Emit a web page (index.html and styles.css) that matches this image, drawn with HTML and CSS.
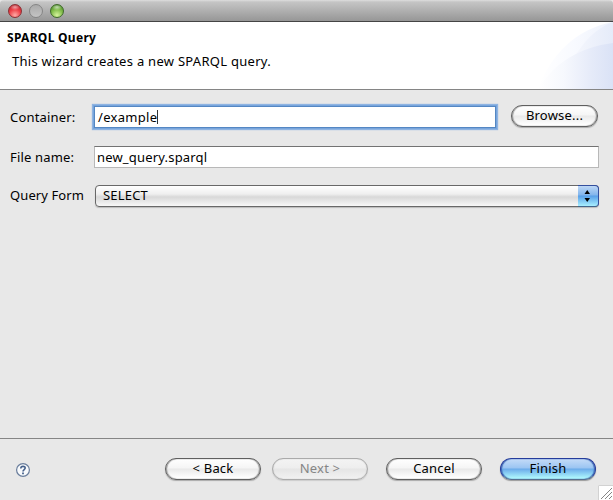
FILE: index.html
```html
<!DOCTYPE html>
<html lang="en">
<head>
<meta charset="utf-8">
<title>SPARQL Query</title>
<link rel="stylesheet" href="styles.css">
</head>
<body>
<main class="window">
  <div class="titlebar">
    <span class="light red"></span><span class="light gray"></span><span class="light green"></span>
  </div>
  <header class="banner">
    <svg class="swoosh" width="82" height="67" viewBox="0 0 82 67" aria-hidden="true">
      <defs>
        <linearGradient id="a"><stop offset="0" stop-color="#fff"/><stop offset=".5" stop-color="#f8faff"/><stop offset="1" stop-color="#edf1fb"/></linearGradient>
        <linearGradient id="b"><stop offset="0" stop-color="#f5f7fd"/><stop offset="1" stop-color="#e5ebf9"/></linearGradient>
        <linearGradient id="c"><stop offset="0" stop-color="#fff"/><stop offset=".35" stop-color="#f6f8fd"/><stop offset=".7" stop-color="#e6ebf9"/><stop offset="1" stop-color="#dae2f6"/></linearGradient>
      </defs>
      <path d="M7 67C19 34 44 7 82 0V67Z" fill="url(#a)"/>
      <path d="M43 36C53 19 64 7 82 0V40Z" fill="url(#b)"/>
      <path d="M7 67C23 41 49 25 82 21V67Z" fill="url(#c)"/>
    </svg>
    <h1>SPARQL Query</h1>
    <p>This wizard creates a new SPARQL query.</p>
  </header>
  <section class="form">
    <div class="row container-row">
      <span class="label">Container:</span>
      <div class="field focused"><span>/example</span><i class="caret"></i></div>
      <button class="button browse"><span>Browse...</span></button>
    </div>
    <div class="row file-row">
      <span class="label">File name:</span>
      <div class="field"><span>new_query.sparql</span></div>
    </div>
    <div class="row query-row">
      <span class="label">Query Form</span>
      <div class="select"><span>SELECT</span>
        <div class="stepper"><svg width="20" height="20" viewBox="0 0 20 20"><path d="M6.500 8h5.500L9.250 4ZM6.500 12h5.500L9.250 16Z"/></svg></div>
      </div>
    </div>
  </section>
  <footer class="footer">
    <svg class="help" width="16" height="16" viewBox="0 0 16 16"><circle cx="8" cy="8" r="6.400" fill="#f8fafc" stroke="#6a7e9c" stroke-width="1.200"/><path d="M5.800 6.400C5.800 3.700 10.200 3.700 10.200 6.100C10.200 7.600 8 7.600 8 9.500" fill="none" stroke="#47628c" stroke-width="1.600"/><path d="M7.100 10.600h1.800v1.600H7.100z" fill="#47628c"/></svg>
    <button class="button back"><span>&lt; Back</span></button>
    <button class="button next" disabled><span>Next &gt;</span></button>
    <button class="button cancel"><span>Cancel</span></button>
    <button class="button finish"><span>Finish</span></button>
    <svg class="grip" width="15" height="15" viewBox="0 0 15 15"><path d="M0 0h15v15H0z" fill="#fff"/><path d="M.5 15V.5H15" fill="none" stroke="#d2d2d2"/><path d="M3 14L14 3M7 14L14 7M11 14L14 11" stroke="#858585" stroke-width="1"/></svg>
  </footer>
</main>
</body>
</html>
```
FILE: styles.css
```css
* { box-sizing: border-box; }
body { margin: 0; background: #e8e8e8; }
.window {
  width: 613px; height: 500px; display: flex; flex-direction: column;
  position: relative; overflow: hidden; background: #e8e8e8; color: #000;
  font: 13px/18px "Noto Sans", "Open Sans", sans-serif; letter-spacing: .18px;
}
.titlebar {
  height: 22px; flex: none; display: flex; gap: 7px; padding: 4px 0 0 8px;
  background: linear-gradient(#dedede 0, #c5c5c5 2px, #969696 21px);
  border-bottom: 1px solid #454545; border-radius: 4px 4px 0 0;
}
.light { width: 14px; height: 14px; border-radius: 50%; border: 1px solid #777; }
.red { background: radial-gradient(ellipse 5px 3px at 50% 18%, #fff8, transparent), radial-gradient(circle at 50% 85%, #ffaaa5, #ee4148 50%, #a91822); border-color: #8a3034; }
.gray { background: linear-gradient(#aaa, #c4c4c4); border-color: #858585; }
.green { background: radial-gradient(ellipse 5px 3px at 50% 18%, #fff9, transparent), radial-gradient(circle at 50% 85%, #d6f49d, #82bd4b 50%, #3b7b1f); border-color: #3f6a2a; }
.banner { height: 68px; flex: none; position: relative; padding: 7px 0 0 7px; background: #fff; border-bottom: 1px solid #858585; }
.swoosh { position: absolute; right: 0; top: 0; }
h1 { margin: 0; width: max-content; font-size: 12px; line-height: 18px; font-weight: 700; letter-spacing: .3px; }
p { margin: 5px 0 0 5px; width: max-content; line-height: 18px; letter-spacing: .28px; }
.form { flex: 1; padding: 14px 14px 0 10px; }
.row { display: flex; align-items: flex-start; }
.label { flex: none; width: 84px; padding-top: 4px; white-space: nowrap; }
.container-row { height: 42px; }
.file-row { height: 39px; }
.file-row .label { padding-top: 2px; }
.query-row .label { width: 85px; padding-top: 1px; letter-spacing: .1px; }
.field { height: 22px; flex: 1; display: flex; align-items: center; background: #fff; border: 1px solid #b8b8b8; border-top-color: #737373; padding-left: 2px; }
.focused { flex: none; width: 402px; margin: 2px 15px 0 0; padding-left: 3px; letter-spacing: .3px; border-color: #5487c3; box-shadow: 0 0 0 1px #78a5dc, 0 0 1px 2px #8fb4e2; }
.caret { width: 1px; height: 14px; background: #333; }
.button {
  width: 96px; height: 22px; flex: none; padding: 0 0 3px; border: 1px solid #5f5f5f;
  border-radius: 11px; color: #000; font: inherit; letter-spacing: .2px; white-space: nowrap;
  background: linear-gradient(#fff 0, #f5f5f5 45%, #e9e9e9 50%, #fff 95%);
  box-shadow: inset 1px 0 1px #999, inset -1px 0 1px #999, 0 1px 1px #aaa;
}
.button span { display: inline-block; }
.browse { width: 87px; margin-top: 1px; }
.select { flex: 1; height: 22px; display: flex; align-items: center; padding: 0 0 0 7px; border: 1px solid #686868; border-radius: 4px; background: linear-gradient(#fff, #efefef 40%, #d8d8d8 55%, #f8f8f8); box-shadow: 0 1px 1px #bbb; }
.select span { padding-bottom: 2px; }
.stepper { margin: -1px -1px -1px auto; width: 21px; height: 22px; border: 1px solid #344f9e; border-left: 0; border-bottom-color: #42658b; border-radius: 0 4px 4px 0; background: linear-gradient(#bdd7f6, #82b5ec 45%, #58a0e9 50%, #a8efff); }
.stepper svg { display: block; }
.footer { height: 62px; flex: none; display: flex; position: relative; padding: 19px 0 0 15px; border-top: 1px solid #858585; }
.help { margin: 4px 134px 0 0; }
.next { margin-left: 11px; color: #858585; border-color: #aaa; background: linear-gradient(#f3f3f3, #eee 45%, #e5e5e5 50%, #f2f2f2); box-shadow: inset 0 0 1px #aaa, 0 1px 1px #ccc; }
.cancel { margin-left: 18px; }
.finish { margin-left: 18px; border-color: #253c9b; border-bottom-color: #566f8f; background: linear-gradient(#c4dbf8, #9bc5f2 45%, #6babea 50%, #b5ffff); box-shadow: inset 1px 0 1px #3c69b4, inset -1px 0 1px #3c69b4, 0 1px 1px #999; }
.grip { position: absolute; right: 0; bottom: 0; }
```
